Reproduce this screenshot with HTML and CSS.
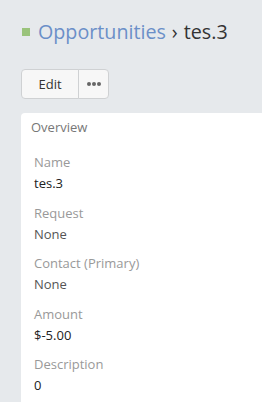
FILE: index.html
```html
<!DOCTYPE html>
<html lang="en">
<head>
    <meta charset="UTF-8">
    <meta name="viewport" content="width=device-width, initial-scale=1.0">
    <title>tes.3 - Opportunities</title>
    <link rel="stylesheet" href="styles.css">
</head>
<body>
    <div class="page">
        <div class="page-header">
            <span class="scope-mark"></span>
            <a class="crumb-link" href="#">Opportunities</a>
            <span class="crumb-sep">&rsaquo;</span>
            <span class="crumb-current">tes.3</span>
        </div>

        <div class="btn-group">
            <button class="btn">Edit</button>
            <button class="btn btn-more">
                <svg width="14" height="4" viewBox="0 0 14 4">
                    <circle cx="2" cy="2" r="2"/>
                    <circle cx="7" cy="2" r="2"/>
                    <circle cx="12" cy="2" r="2"/>
                </svg>
            </button>
        </div>

        <div class="panel">
            <div class="panel-heading">Overview</div>
            <div class="panel-body">
                <div class="field">
                    <div class="field-label">Name</div>
                    <div class="field-value">tes.3</div>
                </div>
                <div class="field">
                    <div class="field-label">Request</div>
                    <div class="field-value muted">None</div>
                </div>
                <div class="field">
                    <div class="field-label">Contact (Primary)</div>
                    <div class="field-value muted">None</div>
                </div>
                <div class="field">
                    <div class="field-label">Amount</div>
                    <div class="field-value">$-5.00</div>
                </div>
                <div class="field">
                    <div class="field-label">Description</div>
                    <div class="field-value">0</div>
                </div>
            </div>
        </div>
    </div>
</body>
</html>
```

FILE: styles.css
```css
body {
    margin: 0;
    background-color: #e6e9ec;
    font-family: 'Open Sans', sans-serif;
    font-size: 13px;
    color: #333;
    overflow: hidden;
}

.page {
    padding: 18px 0 0 21px;
}

.page-header {
    display: flex;
    align-items: center;
    font-size: 19.7px;
    line-height: 28px;
    height: 28px;
}

.scope-mark {
    width: 8px;
    height: 8px;
    background-color: #9ac37b;
    margin: 0 8px 0 1px;
}

.crumb-link {
    color: #6b8fc8;
    text-decoration: none;
}

.crumb-sep {
    margin: 0 6px;
    color: #333;
}

.crumb-current {
    color: #333;
}

.btn-group {
    display: flex;
    margin-top: 23px;
}

.btn {
    font-family: 'Open Sans', sans-serif;
    font-size: 13px;
    color: #333;
    background-color: #f7f7f7;
    border: 1px solid #cfd1d3;
    height: 30px;
    padding: 0;
    cursor: pointer;
    border-radius: 4px 0 0 4px;
    width: 58px;
}

.btn-more {
    width: 31px;
    margin-left: -1px;
    border-radius: 0 4px 4px 0;
    display: flex;
    align-items: center;
    justify-content: center;
}

.btn-more svg {
    fill: #666;
}

.panel {
    margin-top: 14px;
    background-color: #fff;
    border-radius: 4px 0 0 0;
    min-height: 300px;
}

.panel-heading {
    padding: 4px 10px 0;
    line-height: 20px;
    color: #777;
}

.panel-body {
    padding: 15px 13px 0;
}

.field {
    margin-bottom: 9.5px;
}

.field-label {
    color: #999;
    line-height: 20px;
    margin-bottom: 1px;
}

.field-value {
    line-height: 20px;
    color: #222;
}

.field-value.muted {
    color: #555;
}
```
